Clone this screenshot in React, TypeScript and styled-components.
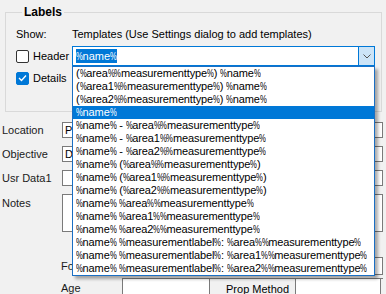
import React from 'react';
import styled, { createGlobalStyle } from 'styled-components';

const Global = createGlobalStyle`
  html, body { margin: 0; padding: 0; }
  body {
    background: #f1f1f1;
    font-family: "Liberation Sans", Arial, sans-serif;
    font-size: 11px;
    color: #111;
  }
`;

const Page = styled.div`
  position: relative;
  width: 386px;
  height: 294px;
  overflow: hidden;
  padding-top: 5px;
  box-sizing: border-box;
`;

const Group = styled.fieldset`
  margin: 0 4px 0 5px;
  padding: 9px 6px 26px 10px;
  border: 1px solid #d9d9d9;
  min-width: 0;
`;

const Legend = styled.legend`
  margin-left: 6px;
  padding: 0 2px;
  font-weight: bold;
  font-size: 12px;
  line-height: 14px;
  color: #000;
`;

const GroupGrid = styled.div`
  display: grid;
  grid-template-columns: 56px 1fr;
  grid-template-rows: 13px 20px 14px;
  row-gap: 5px;
  align-items: center;
`;

const Text = styled.span`
  line-height: 13px;
  color: #000;
  white-space: nowrap;
`;

const CheckLabel = styled.label`
  display: flex;
  align-items: center;
  gap: 4px;
  color: #000;
  line-height: 13px;
`;

const Box = styled.span<{ $checked?: boolean }>`
  width: 13px;
  height: 13px;
  box-sizing: border-box;
  border-radius: 2px;
  border: 1px solid ${(p) => (p.$checked ? '#0078d7' : '#333')};
  background: ${(p) => (p.$checked ? '#0078d7' : '#fff')};
  display: flex;
  align-items: center;
  justify-content: center;
`;

const Combo = styled.div`
  position: relative;
  height: 20px;
  box-sizing: border-box;
  border: 1px solid #0078d7;
  background: #fff;
  display: flex;
`;

const ComboValue = styled.div`
  flex: 1;
  display: flex;
  align-items: center;
  padding-left: 3px;
`;

const Selected = styled.span`
  background: #0078d7;
  color: #fff;
  line-height: 14px;
  white-space: nowrap;
`;

const ArrowButton = styled.div`
  width: 15px;
  background: #cce4f7;
  border-left: 1px solid #0078d7;
  display: flex;
  align-items: center;
  justify-content: center;
`;

const List = styled.ul`
  position: absolute;
  top: calc(100% + 1px);
  left: -1px;
  right: -1px;
  margin: 0;
  padding: 0;
  list-style: none;
  background: #fff;
  border: 1px solid #1a6fc4;
  box-shadow: 3px 3px 3px rgba(0, 0, 0, 0.32);
  z-index: 10;
`;

const Item = styled.li<{ $selected?: boolean }>`
  height: 13px;
  line-height: 13px;
  padding-left: 3px;
  white-space: nowrap;
  overflow: hidden;
  letter-spacing: -0.12px;
  color: ${(p) => (p.$selected ? '#fff' : '#000')};
  background: ${(p) => (p.$selected ? '#0078d7' : 'transparent')};
`;

const Pct = styled.span`
  display: inline-block;
  width: 6.6px;
  transform: scaleX(0.7);
  transform-origin: 0 50%;
`;

const Form = styled.div`
  margin-top: 10px;
  padding: 0 3px 0 2px;
  display: grid;
  grid-template-columns: 60px 1fr;
  row-gap: 8px;
  align-items: center;
`;

const FieldLabel = styled.span<{ $top?: boolean }>`
  color: #1a1a1a;
  line-height: 13px;
  white-space: nowrap;
  align-self: ${(p) => (p.$top ? 'start' : 'center')};
  padding-top: ${(p) => (p.$top ? '3px' : '0')};
`;

const Input = styled.div<{ $h?: number }>`
  height: ${(p) => p.$h ?? 16}px;
  box-sizing: border-box;
  border: 1px solid #7a7a7a;
  background: #fff;
  padding-left: 2px;
  line-height: 14px;
  color: #000;
  overflow: hidden;
  white-space: nowrap;
`;

const Lower = styled.div`
  margin: 25px 3px 0 61px;
  display: grid;
  grid-template-columns: 61px 1fr;
  row-gap: 3px;
  align-items: center;
`;

const Table = styled.div`
  display: grid;
  grid-template-columns: 87px 86px 86px;
  height: 20px;
  border-top: 1px solid #7a7a7a;
`;

const Cell = styled.div<{ $last?: boolean }>`
  border-left: 1px solid #7a7a7a;
  border-right: ${(p) => (p.$last ? '1px solid #7a7a7a' : 'none')};
  background: #fff;
`;

const HeadCell = styled.div`
  border-left: 1px solid #7a7a7a;
  display: flex;
  align-items: center;
  justify-content: flex-end;
  padding-right: 6px;
  color: #000;
  white-space: nowrap;
`;

const pctText = (s: string) => {
  const parts = s.split('%');
  const out: React.ReactNode[] = [];
  parts.forEach((p, i) => {
    if (i > 0) out.push(<Pct key={`p${i}`}>%</Pct>);
    if (p) out.push(<React.Fragment key={`t${i}`}>{p}</React.Fragment>);
  });
  return out;
};

const templates = [
  '(%area%%measurementtype%) %name%',
  '(%area1%%measurementtype%) %name%',
  '(%area2%%measurementtype%) %name%',
  '%name%',
  '%name% - %area%%measurementtype%',
  '%name% - %area1%%measurementtype%',
  '%name% - %area2%%measurementtype%',
  '%name% (%area%%measurementtype%)',
  '%name% (%area1%%measurementtype%)',
  '%name% (%area2%%measurementtype%)',
  '%name% %area%%measurementtype%',
  '%name% %area1%%measurementtype%',
  '%name% %area2%%measurementtype%',
  '%name% %measurementlabel%: %area%%measurementtype%',
  '%name% %measurementlabel%: %area1%%measurementtype%',
  '%name% %measurementlabel%: %area2%%measurementtype%',
];

export default function App() {
  return (
    <>
      <Global />
      <Page>
        <Group>
          <Legend>Labels</Legend>
          <GroupGrid>
            <Text>Show:</Text>
            <Text>Templates (Use Settings dialog to add templates)</Text>
            <CheckLabel>
              <Box />
              Header
            </CheckLabel>
            <Combo>
              <ComboValue>
                <Selected>{pctText('%name%')}</Selected>
              </ComboValue>
              <ArrowButton>
                <svg width="8" height="5" viewBox="0 0 8 5">
                  <polyline points="0.5,0.5 4,4 7.5,0.5" fill="none" stroke="#555" strokeWidth="1" />
                </svg>
              </ArrowButton>
              <List>
                {templates.map((t, i) => (
                  <Item key={i} $selected={i === 3}>
                    {pctText(t)}
                  </Item>
                ))}
              </List>
            </Combo>
            <CheckLabel>
              <Box $checked>
                <svg width="9" height="8" viewBox="0 0 9 8">
                  <polyline points="1,4 3.5,6.5 8,1.5" fill="none" stroke="#fff" strokeWidth="1.3" />
                </svg>
              </Box>
              Details
            </CheckLabel>
            <span />
          </GroupGrid>
        </Group>
        <Form>
          <FieldLabel>Location</FieldLabel>
          <Input>Pl</Input>
          <FieldLabel>Objective</FieldLabel>
          <Input>D</Input>
          <FieldLabel>Usr Data1</FieldLabel>
          <Input />
          <FieldLabel $top>Notes</FieldLabel>
          <Input $h={38} />
        </Form>
        <Lower>
          <FieldLabel>Font</FieldLabel>
          <Input $h={18} />
          <FieldLabel>Age</FieldLabel>
          <Table>
            <Cell />
            <HeadCell>Prop Method</HeadCell>
            <Cell $last />
          </Table>
        </Lower>
      </Page>
    </>
  );
}
